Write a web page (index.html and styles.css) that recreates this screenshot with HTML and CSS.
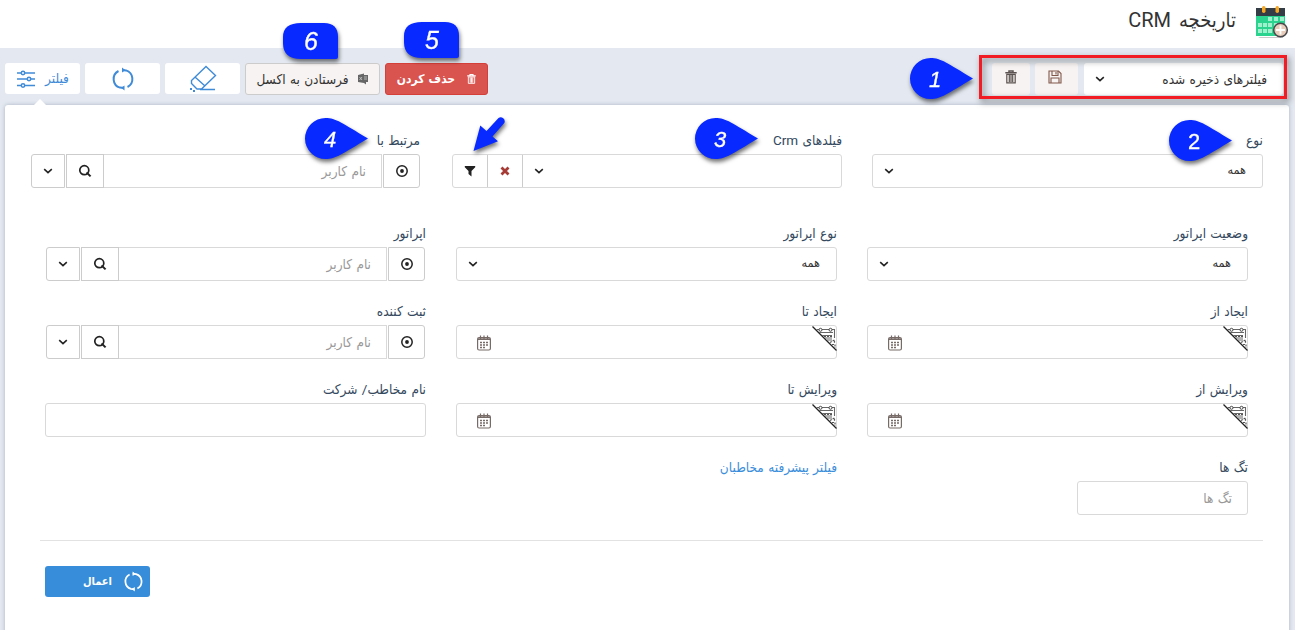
FILE: index.html
```html
<!DOCTYPE html>
<html lang="fa" dir="rtl">
<head>
<meta charset="utf-8">
<title>تاریخچه CRM</title>
<link rel="stylesheet" href="styles.css">
</head>
<body>
<svg class="defs" width="0" height="0">
  <symbol id="chev" viewBox="0 0 10 8"><path d="M1.2 2.2 L5 5.600 L8.800 2.2" fill="none" stroke="#222" stroke-width="1.600"/></symbol>
  <symbol id="search" viewBox="0 0 14 14"><circle cx="6.3" cy="6.2" r="4.500" fill="none" stroke="#222" stroke-width="1.700"/><path d="M8.500 8.500 L12.600 12.400" stroke="#222" stroke-width="2"/></symbol>
  <symbol id="target" viewBox="0 0 14 14"><circle cx="7" cy="7" r="5.200" fill="none" stroke="#222" stroke-width="1.500"/><circle cx="7" cy="7" r="1.900" fill="#222"/></symbol>
  <symbol id="cal" viewBox="0 0 14 16"><rect x=".6" y="2.6" width="12.8" height="12.4" rx="1.5" fill="none" stroke="#776b67" stroke-width="1.2"/><path d="M1 4.2H13" stroke="#776b67" stroke-width="1.600"/><path d="M3.500 .5V4M7 .5V4M10.500 .5V4" stroke="#776b67" stroke-width="1.2"/><path d="M3 7.500H11M3 10H11M3 12.500H9" stroke="#776b67" stroke-width="1.500" stroke-dasharray="2 1"/></symbol>
  <symbol id="corner" viewBox="0 0 26 26"><path d="M.5 .5 L24.500 24.500" stroke="#222" stroke-width="1.200"/><path d="M4.500 3.500H7M10 3.500H17M20 3.500H22.500V12M7 6.500H21M10 9.500H20M13 12H20M15 14H20" fill="none" stroke="#666" stroke-width="1.100"/><path d="M12 10.500H20M18 16.500L22.500 14V17M20 18.500H23V22" fill="none" stroke="#555" stroke-width="1.200" stroke-dasharray="2 1"/><circle cx="8.500" cy="3.800" r="1.500" fill="#fff" stroke="#444"/><circle cx="18.500" cy="3.800" r="1.500" fill="#fff" stroke="#444"/></symbol>
  <symbol id="sync" viewBox="0 0 22 24"><path d="M6.500 4A9 9 0 0 0 8 20.600L12 21M15.500 20A9 9 0 0 0 14 3.400L10 3" fill="none" stroke="currentColor" stroke-width="2"/><path d="M10 .5L13.500 3.200L10 5.500ZM12.500 18.500V23.500L9 20.800Z" fill="currentColor"/></symbol>
  <symbol id="trash" viewBox="0 0 12 14"><path d="M4 2.2V1H8V2.2M.3 2.8H11.7" fill="none" stroke="currentColor" stroke-width="1.5"/><path d="M1.8 4.5V12.8H10.2V4.5M4.3 5V12M6 5V12M7.7 5V12M1.2 4.3H10.8" fill="none" stroke="currentColor" stroke-width="1.2"/></symbol>
</svg>

<header class="header">
  <svg class="logo" viewBox="0 0 34 34">
    <path d="M3 32H24L28 28V33H5Z" fill="#c9c9c9"/>
    <rect x="1" y="10" width="29" height="21" fill="#2bd48e"/>
    <path d="M13 12h4v4h-4zM19 12h4v4h-4zM25 12h4v4h-4zM3 18h4v4H3zM8 18h4v4H8zM13 18h4v4h-4zM19 18h4v4h-4zM3 24h4v4H3zM8 24h4v4H8zM13 24h4v4h-4z" fill="#9ff0cd"/>
    <path d="M1 3H30V11H1Z" fill="#343c46"/>
    <rect x="7" y="1" width="3.5" height="7" rx="1.7" fill="#f5a623"/><rect x="20.500" y="1" width="3.5" height="7" rx="1.7" fill="#f5a623"/>
    <circle cx="25.500" cy="25" r="6.8" fill="#e8cdbb" stroke="#4a4a4e" stroke-width="1.5"/>
    <path d="M25.500 20.500V29.500M21 25H30" stroke="#fff" stroke-width="1.8"/>
  </svg>
  <h1 class="title"><span class="t">تاریخچه CRM</span></h1>
</header>

<div class="toolbar">
  <div class="saved">
    <div class="saved-select"><span class="t">فیلترهای ذخیره شده</span><svg class="chev"><use href="#chev"/></svg></div>
    <div class="saved-btn save"><svg width="14" height="14" viewBox="0 0 14 14" fill="none" stroke="#81574c" stroke-width="1.1"><path d="M1 1H10.500L13 3.500V13H1Z"/><path d="M4 1V5.500H10V1M3 13V8H11V13"/><path d="M8 2V4.500"/></svg></div>
    <div class="saved-btn del"><svg class="trash"><use href="#trash"/></svg></div>
  </div>
  <div class="actions">
    <div class="btn danger"><svg class="trash-sm"><use href="#trash"/></svg><span class="t">حذف کردن</span></div>
    <div class="btn excel"><svg width="12" height="12" viewBox="0 0 12 12"><path d="M1 2L7 .5V2H11V9H9V11.500L7 10L1 9Z" fill="#666"/><path d="M2.500 4L5 7M5 4L2.500 7M7 4H10M7 6H10" stroke="#ccc" stroke-width=".8"/></svg><span class="t">فرستادن به اکسل</span></div>
    <div class="btn tool"><svg width="28" height="28" viewBox="0 0 28 28" fill="none" stroke="#3f8bd8" stroke-width="1.400"><path d="M17 1.500L26.500 10.500L12.500 24H8L2.500 18.500V15.500ZM6 12L16 21M11 24.500H26"/><path d="M1 24H3M4 26H6" stroke-width="1.800"/></svg></div>
    <div class="btn tool"><svg class="sync"><use href="#sync"/></svg></div>
    <div class="btn tool filter"><span class="t">فیلتر</span><svg width="20" height="18" viewBox="0 0 20 18" fill="#fff" stroke="#3f8bd8" stroke-width="1.500"><path d="M1 3H19M1 9H19M1 15.500H19"/><circle cx="7" cy="3" r="1.700"/><circle cx="13" cy="9" r="1.700"/><circle cx="7" cy="15.500" r="1.700"/></svg></div>
  </div>
</div>

<main class="panel">
  <div class="row first">
    <div class="field"><label><span class="t">نوع</span></label><div class="box select"><span class="t">همه</span><svg class="chev"><use href="#chev"/></svg></div></div>
    <div class="field"><label><span class="t">فیلدهای Crm</span></label>
      <div class="box combo"><div class="combo-main"><svg class="chev"><use href="#chev"/></svg></div><div class="cell"><svg width="10" height="10" viewBox="0 0 10 10"><path d="M1.500 1.500L8.500 8.500M8.500 1.500L1.500 8.500" stroke="#a63a35" stroke-width="2.800"/></svg></div><div class="cell"><svg width="12" height="12" viewBox="0 0 12 12"><path d="M.8 1H11.200V2.200L7.500 6V11.500L4.500 9V6L.8 2.200Z" fill="#222"/></svg></div></div></div>
    <div class="field"><label><span class="t">مرتبط با</span></label>
      <div class="lookup"><div class="lk target"><svg class="ic"><use href="#target"/></svg></div><div class="lk input"><span class="t">نام کاربر</span></div><div class="lk search"><svg class="ic"><use href="#search"/></svg></div><div class="lk drop"><svg class="chev"><use href="#chev"/></svg></div></div></div>
  </div>
  <div class="row rest">
    <div class="field"><label><span class="t">وضعیت اپراتور</span></label><div class="box select"><span class="t">همه</span><svg class="chev"><use href="#chev"/></svg></div></div>
    <div class="field"><label><span class="t">نوع اپراتور</span></label><div class="box select"><span class="t">همه</span><svg class="chev"><use href="#chev"/></svg></div></div>
    <div class="field"><label><span class="t">اپراتور</span></label>
      <div class="lookup"><div class="lk target"><svg class="ic"><use href="#target"/></svg></div><div class="lk input"><span class="t">نام کاربر</span></div><div class="lk search"><svg class="ic"><use href="#search"/></svg></div><div class="lk drop"><svg class="chev"><use href="#chev"/></svg></div></div></div>
    <div class="field"><label><span class="t">ایجاد از</span></label><div class="box date"><svg class="corner"><use href="#corner"/></svg><svg class="cal"><use href="#cal"/></svg></div></div>
    <div class="field"><label><span class="t">ایجاد تا</span></label><div class="box date"><svg class="corner"><use href="#corner"/></svg><svg class="cal"><use href="#cal"/></svg></div></div>
    <div class="field"><label><span class="t">ثبت کننده</span></label>
      <div class="lookup"><div class="lk target"><svg class="ic"><use href="#target"/></svg></div><div class="lk input"><span class="t">نام کاربر</span></div><div class="lk search"><svg class="ic"><use href="#search"/></svg></div><div class="lk drop"><svg class="chev"><use href="#chev"/></svg></div></div></div>
    <div class="field"><label><span class="t">ویرایش از</span></label><div class="box date"><svg class="corner"><use href="#corner"/></svg><svg class="cal"><use href="#cal"/></svg></div></div>
    <div class="field"><label><span class="t">ویرایش تا</span></label><div class="box date"><svg class="corner"><use href="#corner"/></svg><svg class="cal"><use href="#cal"/></svg></div></div>
    <div class="field"><label><span class="t">نام مخاطب/ شرکت</span></label><div class="box"></div></div>
    <div class="field"><label><span class="t">تگ ها</span></label><div class="box tags"><span class="t">تگ ها</span></div></div>
    <div class="field"><a class="link"><span class="t">فیلتر پیشرفته مخاطبان</span></a></div>
  </div>
  <div class="footer"><div class="apply"><svg class="sync"><use href="#sync"/></svg><span class="t">اعمال</span></div></div>
</main>

<svg class="marks" width="1295" height="630" viewBox="0 0 1295 630" direction="ltr">
  <defs>
    <path id="drop" d="M20.500 0C31 0 37 5 63 20.500C37 36 31 41 20.500 41A20.500 20.500 0 0 1 20.500 0Z"/>
    <path id="badge" d="M18 0H41Q55 0 55 14V34Q55 36 53 36H18Q0 36 0 20V14Q0 0 18 0Z"/>
  </defs>
  <rect class="frame" x="980.500" y="56.500" width="305" height="41"/>
  <g class="blue">
    <use href="#drop" x="910" y="58"/><use href="#drop" x="1169" y="120"/><use href="#drop" x="695" y="118"/><use href="#drop" x="305" y="118"/>
    <use href="#badge" x="404" y="22"/><use href="#badge" x="283" y="23"/>
    <path d="M473.500 151L480.300 125.500L486.500 131L498.500 118A4 4 0 0 1 504.300 123L492.500 136.500L498 141.300Z"/>
  </g>
  <g class="digits">
    <text x="935" y="87">1</text><text class="up" x="1194" y="149">2</text><text x="720" y="147">3</text><text x="330" y="147">4</text><text x="432" y="49" class="big">5</text><text x="311" y="50" class="big">6</text>
  </g>
</svg>
</body>
</html>
```
FILE: styles.css
```css
* { box-sizing: border-box; }
body { margin: 0; width: 1295px; height: 630px; overflow: hidden; background: #e4e9f1; font: 13.5px/16px Roboto, "DejaVu Sans Condensed", "DejaVu Sans", sans-serif; word-spacing: 1px; color: #333; position: relative; }
svg { display: block; flex: none; }
.defs { position: absolute; }
.t { white-space: nowrap; }
.header { height: 48px; background: #fff; display: flex; padding: 5px 6px 0 0; }
.logo { width: 34px; height: 34px; }
.title { margin: 2px 19px 0 0; font-size: 20px; line-height: 26px; font-weight: 400; color: #333; word-spacing: 3px; }
.toolbar { height: 57px; display: flex; justify-content: space-between; align-items: flex-start; padding: 15px 12px 0 5px; }
.saved { display: flex; }
.saved-select { width: 199px; height: 32px; background: #fff; border-radius: 3px; display: flex; justify-content: space-between; align-items: center; padding: 0 16px 0 11px; }
.saved-btn { height: 32px; background: #f7f3f2; border-radius: 3px; display: flex; align-items: center; justify-content: center; }
.save { width: 43px; margin-right: 6px; padding: 0 0 4px 0; }
.save svg { margin-left: -3px; }
.del { width: 38px; margin-right: 5px; color: #5b5351; padding-bottom: 4px; }
.trash { width: 12px; height: 14px; }
.trash-sm { width: 9px; height: 12px; }
.chev { width: 10px; height: 8px; }
.actions { display: flex; gap: 5px; }
.btn { height: 32px; border-radius: 3px; display: flex; align-items: center; justify-content: center; }
.danger { width: 103px; background: #d9534f; border: 1px solid #d43f3a; color: #fff; font-size: 12px; font-weight: 700; gap: 12px; }
.excel { width: 135px; background: #f6f3f2; border: 1px solid #ccc; gap: 8px; }
.tool { width: 75px; height: 31px; background: #fff; color: #3f8bd8; }
.sync { width: 22px; height: 24px; }
.filter { gap: 9px; position: relative; }
.filter .t { margin-top: -2px; }
.filter::after { content: ""; position: absolute; left: 28px; top: 36px; border: 7px solid transparent; border-top: 0; border-bottom-color: #fff; }
.panel { width: 1284px; height: 540px; margin-right: 6px; background: #fff; border-radius: 3px; box-shadow: 0 0 4px #aab4c2; padding-top: 25px; }
.row { display: grid; color: #34495e; }
.first { grid-template-columns: 391px 390px 389px; column-gap: 30px; margin-right: 26px; }
.first .field:last-child { margin-right: 2px; margin-left: -2px; }
.rest { grid-template-columns: 381px 381px 381px; column-gap: 30px; margin: 34px 41px 0 0; }
.field { height: 78px; min-width: 0; }
.first .field { height: 59px; }
label, .link { display: block; height: 24px; line-height: 20px; }
.link { color: #3b8edb; }
.box { height: 34px; border: 1px solid #d9d9d9; border-radius: 3px; background: #fff; position: relative; }
.select { display: flex; align-items: center; justify-content: space-between; padding: 0 16px 0 11px; color: #333; }
.select .t { margin-top: -2px; font-size: 12.5px; }
.combo { display: flex; }
.combo-main { flex: 1; display: flex; align-items: center; justify-content: flex-end; padding-left: 11px; }
.cell { width: 35px; border-right: 1px solid #ccc; display: flex; align-items: center; justify-content: center; }
.lookup { display: flex; height: 34px; }
.rest .lookup { margin-right: 1px; width: 379px; }
.lk { border: 1px solid #ccc; display: flex; align-items: center; justify-content: center; }
.target { width: 37px; border-radius: 0 3px 3px 0; }
.input { flex: 1; margin-right: 1px; border-color: #d9d9d9; justify-content: flex-start; padding-right: 15px; color: #999; border-left: 0; }
.search { width: 38px; }
.drop { width: 34px; margin-right: 1px; border-radius: 3px 0 0 3px; }
.ic { width: 14px; height: 14px; }
.date { display: flex; justify-content: space-between; }
.corner { width: 26px; height: 26px; margin-right: -2px; }
.cal { width: 14px; height: 16px; margin: 9px 0 0 20px; }
.tags { width: 171px; display: flex; align-items: center; padding-right: 15px; color: #999; }
.footer { margin: 5px 26px 0 35px; border-top: 1px solid #e2e2e2; padding: 25px 0 0 5px; display: flex; justify-content: flex-end; }
.apply { width: 105px; height: 31px; border-radius: 3px; background: #378dd9; color: #fff; font-size: 11px; font-weight: 700; display: flex; align-items: center; padding-right: 7px; gap: 12px; }
.apply .sync { width: 19px; height: 21px; }
.marks { position: absolute; left: 0; top: 0; }
.frame { fill: none; stroke: #f21d24; stroke-width: 3; filter: drop-shadow(2px 3px 3px rgba(0,0,0,.5)); }
.blue { fill: #0829ff; filter: drop-shadow(1px 3px 2px rgba(0,0,0,.55)); }
.digits { fill: #fff; stroke: #fff; stroke-width: .3px; font: italic 22px "Liberation Sans", sans-serif; text-anchor: middle; }
.up { font-style: normal; }
.big { font-size: 25px; }
```
